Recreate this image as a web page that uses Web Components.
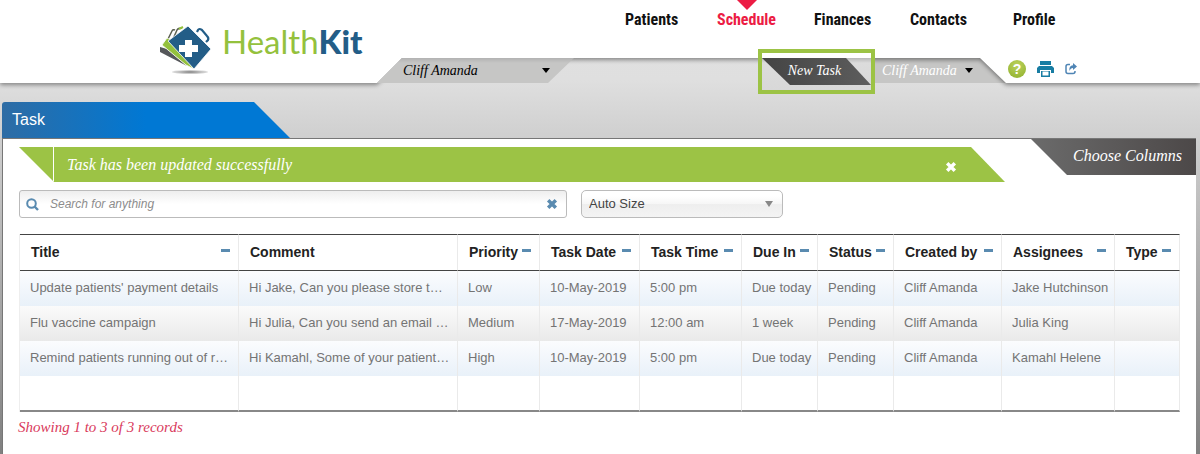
<!DOCTYPE html>
<html lang="en">
<head>
<meta charset="utf-8">
<meta name="viewport" content="width=device-width, initial-scale=1">
<title>HealthKit – Tasks</title>
<style>
  html { min-height: 100%; }
  body {
    margin: 0;
    min-height: 100vh;
    display: flex;
    flex-direction: column;
    background: linear-gradient(#e2e2e2 0, #dfdfdf 80px, #cfcfcf 138px, #808080 454px) no-repeat #808080;
    font-family: "Liberation Sans", Arial, sans-serif;
    --serif: "Liberation Serif", "Times New Roman", serif;
    --green: #9cc345;
    --blue: #5a8bb0;
    --red: #ec1c44;
  }
  task-panel { flex: 1; }
</style>
</head>
<body>
<site-header></site-header>
<task-panel>
  <alert-bar slot="alert">Task has been updated successfully</alert-bar>
  <search-bar slot="search"></search-bar>
  <task-table slot="table"></task-table>
  <span slot="summary">Showing 1 to 3 of 3 records</span>
</task-panel>

<script>
const define = (name, html, setup) => {
  const template = document.createElement('template');
  template.innerHTML = html;
  customElements.define(name, class extends HTMLElement {
    constructor() {
      super();
      const root = this.attachShadow({ mode: 'open' });
      root.append(template.content.cloneNode(true));
      if (setup) setup(this, root);
    }
  });
};

define('brand-logo', `
  <style>
    :host { display: block; }
    a { display: flex; align-items: flex-start; gap: 9px; text-decoration: none; color: #94c13d; }
    svg { display: block; }
    .word { font: 400 33px/36px Lato, "Open Sans", sans-serif; }
    b { color: #235d87; font-weight: 900; }
  </style>
  <a href="#" aria-label="HealthKit home">
    <svg width="54" height="52" viewBox="0 0 54 52" aria-hidden="true">
      <defs><radialGradient id="g"><stop offset="0" stop-color="#777"/><stop offset="1" stop-color="#bbb" stop-opacity=".5"/></radialGradient></defs>
      <ellipse cx="31" cy="49" rx="18" ry="2" fill="url(#g)"/>
      <path d="M9 16l4-8q1-2 3-1M14 16l4-9q1-2 5-2" fill="none" stroke="#5c6050" stroke-width="1.500"/>
      <path d="M20 6l4-2" stroke="#94c13d" stroke-width="2"/>
      <path d="M1 18L0 25 32 46 10 20z" fill="#fff"/>
      <path d="M1 24L1 29 28 43 8 26z" fill="#55575a"/>
      <path d="M3 22L8 15 12 17 35 46 27 42z" fill="#94c13d" stroke="#fff" stroke-width=".8"/>
      <path d="M38 9l1-2q1-2 4 0l5 6q2 2 1 4l-2 2" fill="none" stroke="#235d87" stroke-width="2.200"/>
      <path d="M29 3L52 26 35 46 9 18z" fill="#235d87" stroke="#fff" stroke-width=".8" stroke-linejoin="round"/>
      <path d="M26 17h7v5h6v7h-6v5h-7v-5h-6v-7h6z" fill="#fff"/>
    </svg>
    <span class="word">Health<b>Kit</b></span>
  </a>`);

define('main-nav', `
  <style>
    :host { display: block; }
    nav { display: grid; grid-template-columns: 92px 97px 96px 103px 43px; }
    a { justify-self: start; position: relative; padding-top: 10px; font: 700 16px/20px "Roboto Condensed", "Open Sans Condensed", "Liberation Sans", sans-serif; color: #111; text-decoration: none; }
    a[aria-current] { color: var(--red); }
    a[aria-current]::before { content: ""; position: absolute; top: 0; left: 50%; margin-left: -10px; border: 10px solid transparent; border-top-color: var(--red); border-bottom: 0; }
  </style>
  <nav aria-label="Main">
    <a href="#">Patients</a><a href="#" aria-current="page">Schedule</a><a href="#">Finances</a><a href="#">Contacts</a><a href="#">Profile</a>
  </nav>`);

define('person-select', `
  <style>
    :host { display: block; }
    label { display: flex; align-items: center; height: 25px; }
    select { appearance: none; flex: 1; min-width: 0; border: 0; background: none; padding: 0; margin: 0; font: italic 14px/24px var(--serif); color: inherit; }
    svg { flex: none; }
  </style>
  <label><select><option>Cliff Amanda</option></select>
    <svg width="8" height="5" viewBox="0 0 8 5" aria-hidden="true"><path d="M0 0h8L4 5z" fill="#000"/></svg></label>`,
  (host, root) => root.querySelector('select').setAttribute('aria-label', host.getAttribute('label')));

define('tool-links', `
  <style>
    :host { display: block; }
    div { display: flex; align-items: center; gap: 11px; height: 22px; }
    button { border: 0; padding: 0; background: none; display: block; }
    svg { display: block; }
    .help { width: 18px; height: 18px; border-radius: 50%; background: radial-gradient(circle at 50% 30%, #bdd35c, #8dae2b); color: #fff; font: 700 14px/18px "Liberation Sans", sans-serif; }
  </style>
  <div>
    <button class="help" aria-label="Help">?</button>
    <button aria-label="Print"><svg width="17" height="16" viewBox="0 0 17 16"><path d="M3 0h11v4H3zM2 5h13l2 2v5h-3V9H3v3H0V7z" fill="#187da3"/><path d="M4 10h9v6H4z" fill="#187da3"/><path d="M5.500 10.500h6v4h-6z" fill="#fff"/></svg></button>
    <button aria-label="Share"><svg width="12" height="12" viewBox="0 0 12 12"><path d="M5 1.500H3Q1 1.500 1 3.500v5q0 2 2 2h5q2 0 2-2V8" fill="none" stroke="#4f85b5" stroke-width="1.500"/><path d="M8 0l4 3.500L8 7V5Q5.500 5 4.500 8 3.500 3 8 2.300z" fill="#4f85b5"/></svg></button>
  </div>`);

define('site-header', `
  <style>
    :host { display: block; position: relative; --slant: polygon(0 0, 100% 0, 100% 83px, calc(100% - 194px) 83px, calc(100% - 220px) 58px, 402px 58px, 377px 83px, 0 83px); }
    .shade { position: absolute; inset: 0; filter: drop-shadow(0 2px 2px rgba(0,0,0,.4)); pointer-events: none; }
    .shade i { display: block; height: 100%; background: #fff; clip-path: var(--slant); }
    .grid { display: grid; grid-template-columns: 377px 1fr auto; grid-template-rows: 58px 27px; }
    brand-logo, main-nav, tool-links { position: relative; }
    brand-logo { grid-row: 1 / 3; padding: 23px 0 0 159px; }
    main-nav { grid-column: 2 / 4; justify-self: end; padding-right: 144px; }
    .left { width: 147px; height: 25px; padding: 0 24px 0 26px; background: linear-gradient(#b2b2b2, #c6c6c5 5px); clip-path: polygon(25px 0, 100% 0, calc(100% - 26px) 100%, 0 100%); }
    .right { display: flex; align-items: flex-start; justify-self: end; }
    .who { width: 91px; height: 25px; margin-left: -31px; padding: 0 35px 0 42px; background: #c6c6c5; color: #fff; }
    .task { position: relative; box-sizing: border-box; width: 109px; height: 37px; margin-top: -5px; padding-top: 5px; outline: 4px solid var(--green); background: linear-gradient(#fff 5px, #b8b8b8 5px, #dcdcdc 10px, #d8d8d8); }
    .task button { display: block; width: 109px; height: 27px; padding: 0 4px 1px 0; border: 0; background: linear-gradient(90deg, #444, #5d5d5d); clip-path: polygon(0 0, 84px 0, 100% 100%, 28px 100%); font: italic 14px/24px var(--serif); color: #fff; }
    tool-links { width: 192px; }
  </style>
  <header>
    <div class="shade"><i></i></div>
    <div class="grid">
      <brand-logo></brand-logo>
      <main-nav></main-nav>
      <person-select class="left" label="Practitioner"></person-select>
      <div class="right">
        <div class="task"><button>New Task</button></div>
        <person-select class="who" label="Signed in as"></person-select>
        <tool-links></tool-links>
      </div>
    </div>
  </header>`);

define('alert-bar', `
  <style>
    :host { display: block; }
    div { display: flex; align-items: center; height: 35px; background: linear-gradient(#fff, #fff) 34px 0 / 1px 100% no-repeat var(--green); clip-path: polygon(0 0, calc(100% - 34px) 0, 100% 100%, 35px 100%); padding: 0 48px; color: #fff; font: italic 16px/34px var(--serif); }
    p { margin: 0; flex: 1; }
    button { border: 0; padding: 0; margin-top: 4px; background: none; }
    svg { display: block; }
  </style>
  <div role="status"><p><slot></slot></p>
    <button aria-label="Dismiss"><svg width="12" height="12" viewBox="0 0 11 11"><path d="M2 2l7 7M9 2L2 9" stroke="#fff" stroke-width="3.200"/></svg></button></div>`);

define('search-bar', `
  <style>
    :host { display: flex; gap: 14px; }
    .box, .pick { display: flex; align-items: center; box-sizing: border-box; height: 28px; border: 1px solid #bbb; }
    .box { flex: 0 1 548px; border-radius: 3px; padding: 0 8px 0 6px; gap: 11px; background: linear-gradient(#eee, #fff 50%); }
    input { flex: 1; min-width: 0; border: 0; background: none; outline: 0; padding: 0; font: italic 12px/20px "Liberation Sans", sans-serif; color: #444; }
    input::placeholder { color: #8c8c8c; opacity: 1; }
    button { border: 0; padding: 0; background: none; }
    svg { display: block; flex: none; }
    .pick { flex: 0 1 202px; border-radius: 5px; padding: 0 9px 0 7px; background: linear-gradient(#fff 20%, #f6f6f6 50%, #eee 52%, #f4f4f4); }
    select { appearance: none; flex: 1; min-width: 0; border: 0; background: none; padding: 0; font: 13px/20px "Liberation Sans", sans-serif; color: #444; }
  </style>
  <label class="box">
    <svg width="13" height="13" viewBox="0 0 13 13" aria-hidden="true"><circle cx="5.500" cy="5.500" r="4.300" fill="none" stroke="#5a8bb0" stroke-width="2"/><path d="M8.500 8.500l3.500 3.500" stroke="#5a8bb0" stroke-width="2.400"/></svg>
    <input type="text" placeholder="Search for anything" aria-label="Search for anything">
    <button aria-label="Clear search"><svg width="12" height="12" viewBox="0 0 11 11"><path d="M2 2l7 7M9 2L2 9" stroke="#5a8bb0" stroke-width="3.200"/></svg></button>
  </label>
  <label class="pick">
    <select aria-label="Column sizing"><option>Auto Size</option></select>
    <svg width="8" height="6" viewBox="0 0 8 6" aria-hidden="true"><path d="M0 0h8L4 6z" fill="#888"/></svg>
  </label>`);

const columns = [
  ['Title', '', 1], ['Comment', '', 0], ['Priority', 82, 1], ['Task Date', 100, 1], ['Task Time', 102, 1],
  ['Due In', 76, 1], ['Status', 76, 1], ['Created by', 108, 1], ['Assignees', 113, 1], ['Type', 65, 1]
];
const rows = [
  ["Update patients' payment details", 'Hi Jake, Can you please store t…', 'Low', '10-May-2019', '5:00 pm', 'Due today', 'Pending', 'Cliff Amanda', 'Jake Hutchinson', ''],
  ['Flu vaccine campaign', 'Hi Julia, Can you send an email …', 'Medium', '17-May-2019', '12:00 am', '1 week', 'Pending', 'Cliff Amanda', 'Julia King', ''],
  ['Remind patients running out of r…', 'Hi Kamahl, Some of your patient…', 'High', '10-May-2019', '5:00 pm', 'Due today', 'Pending', 'Cliff Amanda', 'Kamahl Helene', ''],
  ['', '', '', '', '', '', '', '', '', '']
];
define('task-table', `
  <style>
    :host { display: block; }
    table { table-layout: fixed; width: 100%; border-collapse: separate; border-spacing: 0; border-left: 1px solid #eee; }
    th, td { box-sizing: border-box; text-align: left; border-right: 1px solid #eaeaea; white-space: nowrap; overflow: hidden; text-overflow: ellipsis; }
    th { height: 37px; padding: 0 8px 2px 11px; border-top: 1px solid #444; border-bottom: 1px solid #444; font: 700 14px/20px "Liberation Sans", sans-serif; color: #222; }
    th div { display: flex; align-items: center; justify-content: space-between; }
    th i { flex: none; width: 9px; height: 3px; background: var(--blue); margin-bottom: 2px; }
    td { height: 35px; padding: 0 3px 2px 10px; font: 13px/20px "Liberation Sans", sans-serif; color: #747474; }
    tr:nth-child(odd) td { background: linear-gradient(#fbfcfe, #e9f1f9); }
    tr:nth-child(even) td { background: linear-gradient(#fbfbfb, #e9e9e9); }
    tbody tr:last-child td { background: #fff; height: 36px; border-bottom: 2px solid #888; }
  </style>
  <table>
    <colgroup>${columns.map(c => `<col${c[1] ? ` style="width:${c[1]}px"` : ''}>`).join('')}</colgroup>
    <thead><tr>${columns.map(c => `<th scope="col"><div>${c[0]}${c[2] ? '<i></i>' : ''}</div></th>`).join('')}</tr></thead>
    <tbody>${rows.map(r => `<tr>${r.map(t => `<td>${t}</td>`).join('')}</tr>`).join('')}</tbody>
  </table>`);

define('task-panel', `
  <style>
    :host { display: flex; flex-direction: column; padding: 17px 4px 0 2px; }
    h1 { box-sizing: border-box; margin: 0; width: 288px; height: 36px; padding-left: 10px; font: 400 16px/35px "Liberation Sans", sans-serif; color: #fff; background: linear-gradient(90deg, #2e6ca4, #0078d4 50%); border-top-left-radius: 3px; clip-path: polygon(0 0, 252px 0, 100% 100%, 0 100%); }
    section { flex: 1; background: #fff; border: 1px solid #777; border-bottom: 0; border-right: 0; }
    .top { display: flex; align-items: flex-start; gap: 26px; padding-left: 16px; }
    slot[name=alert]::slotted(*) { flex: 1; margin-top: 8px; }
    .columns { flex: none; width: 165px; height: 36px; border: 0; padding: 0 0 2px 28px; background: linear-gradient(90deg, #6b6b6b, #4c4848); clip-path: polygon(0 0, 100% 0, 100% 100%, 36px 100%); color: #fff; font: italic 16px/34px var(--serif); }
    .body { padding: 8px 16px 0; }
    slot[name=table]::slotted(*) { margin-top: 16px; }
    p { margin: 5px 0 0 -1px; font: italic 15px/20px var(--serif); color: #d93a5c; }
  </style>
  <h1>Task</h1>
  <section>
    <div class="top"><slot name="alert"></slot><button class="columns">Choose Columns</button></div>
    <div class="body"><slot name="search"></slot><slot name="table"></slot><p><slot name="summary"></slot></p></div>
  </section>`);
</script>
</body>
</html>
